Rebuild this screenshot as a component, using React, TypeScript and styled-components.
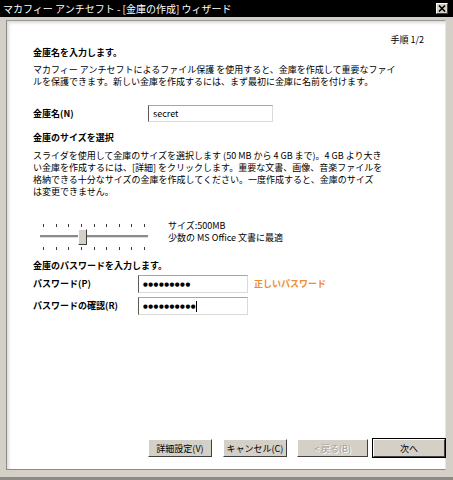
import React from "react";
import styled, { createGlobalStyle } from "styled-components";

const GlobalStyle = createGlobalStyle`
  html, body {
    margin: 0;
    padding: 0;
    background: #d4d0c8;
  }
  body {
    font-family: "Noto Sans CJK JP", "Noto Sans", sans-serif;
  }
`;

const Window = styled.div`
  width: 453px;
  height: 480px;
  display: flex;
  flex-direction: column;
  background: #d4d0c8;
  box-sizing: border-box;
  overflow: hidden;
  border-bottom: 3px solid #8c8a86;
`;

const TitleBar = styled.div`
  height: 17px;
  flex-shrink: 0;
  background: #000;
  color: #fff;
  display: flex;
  align-items: center;
  justify-content: space-between;
  padding: 0 5px 0 3px;
  font-size: 10px;
  line-height: 17px;
  white-space: nowrap;
`;

const CloseButton = styled.div`
  width: 10px;
  height: 9px;
  background: #d4d0c8;
  border: 1px solid;
  border-color: #fff #404040 #404040 #fff;
  display: flex;
  align-items: center;
  justify-content: center;
`;

const Panel = styled.div`
  flex: 1;
  margin: 3px 7px 7px 6px;
  background: #fff;
  border: 1px solid;
  border-color: #9a9894 #e8e6e2 #8c8a86 #8c8a86;
  box-shadow: inset 2px 2px 3px rgba(0, 0, 0, 0.14);
  display: flex;
  flex-direction: column;
  color: #000;
  font-size: 9px;
  line-height: 12px;
`;

const Content = styled.div`
  flex: 1;
  padding: 13px 21px 0 26px;
  display: flex;
  flex-direction: column;
`;

const StepLabel = styled.div`
  align-self: flex-end;
`;

const Heading = styled.div<{ $top: number }>`
  font-weight: bold;
  margin-top: ${(p) => p.$top}px;
  white-space: nowrap;
`;

const Para = styled.p<{ $top: number }>`
  margin: ${(p) => p.$top}px 0 0;
  white-space: nowrap;
`;

const FieldRow = styled.div<{ $top: number }>`
  display: flex;
  align-items: center;
  margin-top: ${(p) => p.$top}px;
`;

const FieldLabel = styled.label<{ $width: number }>`
  width: ${(p) => p.$width}px;
  font-weight: bold;
  white-space: nowrap;
`;

const TextBox = styled.div<{ $width: number; $height: number }>`
  box-sizing: border-box;
  width: ${(p) => p.$width}px;
  height: ${(p) => p.$height}px;
  border: 1px solid;
  border-color: #a8a6a2 #dcdad6 #dcdad6 #5c5a56;
  padding: 0 4px;
  display: flex;
  align-items: center;
  font-size: 9px;
`;

const Dots = styled.span`
  font-family: "DejaVu Sans", sans-serif;
  font-size: 5.5px;
  letter-spacing: 0.5px;
  font-weight: bold;
`;

const Caret = styled.span`
  display: inline-block;
  width: 1px;
  height: 11px;
  background: #000;
  margin-left: 0;
`;

const OkNote = styled.span`
  margin-left: 6px;
  color: #ef8c2c;
  font-weight: bold;
  white-space: nowrap;
`;

const SliderRow = styled.div`
  display: flex;
  align-items: flex-start;
  margin-top: 22px;
`;

const Slider = styled.div`
  width: 108px;
  margin: 4px 0 0 7px;
  display: flex;
  flex-direction: column;
`;

const TickRow = styled.div`
  height: 4px;
  display: flex;
  justify-content: space-between;
  padding: 0 3px 0 3px;
`;

const Tick = styled.span`
  width: 1px;
  height: 3px;
  background: #3a3a3a;
`;

const TrackArea = styled.div`
  position: relative;
  height: 19px;
  &::before {
    content: "";
    position: absolute;
    left: 0;
    right: 0;
    top: 7px;
    height: 2px;
    background: #8c8a86;
    border-bottom: 1px solid #e0ded8;
  }
`;

const Thumb = styled.div`
  position: absolute;
  left: 38px;
  top: 1px;
  width: 7px;
  height: 14px;
  background: #d4d0c8;
  border: 1px solid;
  border-color: #fff #404040 #404040 #fff;
`;

const SliderInfo = styled.div`
  margin-left: 20px;
  white-space: nowrap;
`;

const ButtonBar = styled.div`
  display: flex;
  justify-content: flex-end;
  padding: 0 0 12px;
`;

const Button = styled.button<{ $width: number; $gap: number; $default?: boolean }>`
  box-sizing: border-box;
  width: ${(p) => p.$width}px;
  height: 18px;
  margin-left: ${(p) => p.$gap}px;
  padding: 0;
  background: #d4d0c8;
  font-family: "Noto Sans CJK JP", sans-serif;
  font-size: 9px;
  color: #000;
  border: 1px solid;
  border-color: #fff #404040 #404040 #fff;
  outline: ${(p) => (p.$default ? "1px solid #000" : "none")};
  outline-offset: 0;
  &:disabled {
    color: #a09e9a;
    text-shadow: 1px 1px 0 #fff;
  }
`;

const ticks = Array.from({ length: 9 });

export default function App() {
  return (
    <Window>
      <GlobalStyle />
      <TitleBar>
        <span>マカフィー アンチセフト - [金庫の作成] ウィザード</span>
        <CloseButton>
          <svg width="8" height="7" viewBox="0 0 8 7">
            <path d="M1 0.5 L7 6.5 M7 0.5 L1 6.5" stroke="#000" strokeWidth="1.6" />
          </svg>
        </CloseButton>
      </TitleBar>
      <Panel>
        <Content>
          <StepLabel>手順 1/2</StepLabel>
          <Heading $top={1}>金庫名を入力します。</Heading>
          <Para $top={5}>
            マカフィー アンチセフトによるファイル保護 を使用すると、金庫を作成して重要なファイ
            <br />
            ルを保護できます。新しい金庫を作成するには、まず最初に金庫に名前を付けます。
          </Para>
          <FieldRow $top={17}>
            <FieldLabel $width={115}>金庫名(N)</FieldLabel>
            <TextBox $width={125} $height={17}>secret</TextBox>
          </FieldRow>
          <Heading $top={10}>金庫のサイズを選択</Heading>
          <Para $top={6}>
            スライダを使用して金庫のサイズを選択します (50 MB から 4 GB まで)。4 GB より大き
            <br />
            い金庫を作成するには、[詳細] をクリックします。重要な文書、画像、音楽ファイルを
            <br />
            格納できる十分なサイズの金庫を作成してください。一度作成すると、金庫のサイズ
            <br />
            は変更できません。
          </Para>
          <SliderRow>
            <Slider>
              <TickRow>
                {ticks.map((_, i) => (
                  <Tick key={i} />
                ))}
              </TickRow>
              <TrackArea>
                <Thumb />
              </TrackArea>
              <TickRow>
                {ticks.map((_, i) => (
                  <Tick key={i} />
                ))}
              </TickRow>
            </Slider>
            <SliderInfo>
              サイズ:500MB
              <br />
              少数の MS Office 文書に最適
            </SliderInfo>
          </SliderRow>
          <Heading $top={9}>金庫のパスワードを入力します。</Heading>
          <FieldRow $top={3}>
            <FieldLabel $width={105}>パスワード(P)</FieldLabel>
            <TextBox $width={110} $height={18}>
              <Dots>●●●●●●●●●</Dots>
            </TextBox>
            <OkNote>正しいパスワード</OkNote>
          </FieldRow>
          <FieldRow $top={4}>
            <FieldLabel $width={105}>パスワードの確認(R)</FieldLabel>
            <TextBox $width={110} $height={18}>
              <Dots>●●●●●●●●●●</Dots>
              <Caret />
            </TextBox>
          </FieldRow>
        </Content>
        <ButtonBar>
          <Button $width={64} $gap={0}>詳細設定(V)</Button>
          <Button $width={64} $gap={11}>キャンセル(C)</Button>
          <Button $width={71} $gap={10} disabled>
            &lt; 戻る(B)
          </Button>
          <Button $width={72} $gap={5} $default>
            次へ
          </Button>
        </ButtonBar>
      </Panel>
    </Window>
  );
}
